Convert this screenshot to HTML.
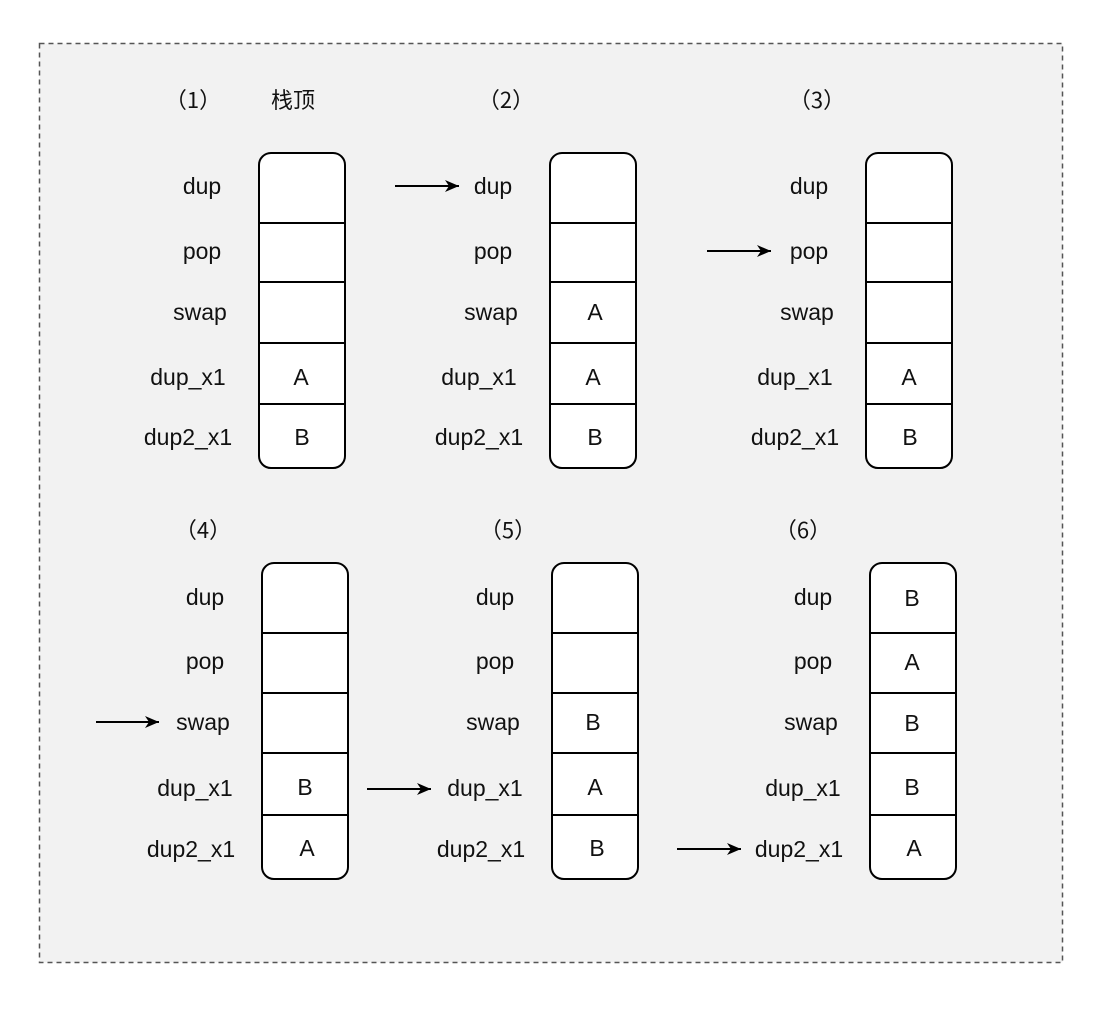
<!DOCTYPE html>
<html><head><meta charset="utf-8"><style>
html,body{margin:0;padding:0;background:#fff;}
svg{display:block;}
text{font-family:"Liberation Sans","Noto Sans CJK SC",sans-serif;font-size:23px;fill:#111;}
.t{font-family:"Noto Sans CJK SC",sans-serif;font-size:22px;}
</style></head><body>
<svg width="1114" height="1012" viewBox="0 0 1114 1012" xmlns="http://www.w3.org/2000/svg">
<defs>
<g id="box1">
<rect x="0" y="0" width="86" height="315" rx="12" fill="#fff" stroke="#000" stroke-width="2"/>
<line x1="1" y1="70" x2="85" y2="70" stroke="#000" stroke-width="2"/>
<line x1="1" y1="129" x2="85" y2="129" stroke="#000" stroke-width="2"/>
<line x1="1" y1="190" x2="85" y2="190" stroke="#000" stroke-width="2"/>
<line x1="1" y1="251" x2="85" y2="251" stroke="#000" stroke-width="2"/>
<g text-anchor="middle">
<text x="-57" y="41">dup</text>
<text x="-57" y="106">pop</text>
<text x="-59" y="167">swap</text>
<text x="-71" y="232">dup_x1</text>
<text x="-71" y="292">dup2_x1</text>
</g>
</g>
<g id="box2">
<rect x="0" y="0" width="86" height="316" rx="12" fill="#fff" stroke="#000" stroke-width="2"/>
<line x1="1" y1="70" x2="85" y2="70" stroke="#000" stroke-width="2"/>
<line x1="1" y1="130" x2="85" y2="130" stroke="#000" stroke-width="2"/>
<line x1="1" y1="190" x2="85" y2="190" stroke="#000" stroke-width="2"/>
<line x1="1" y1="252" x2="85" y2="252" stroke="#000" stroke-width="2"/>
<g text-anchor="middle">
<text x="-57" y="42">dup</text>
<text x="-57" y="106">pop</text>
<text x="-59" y="167">swap</text>
<text x="-67" y="233">dup_x1</text>
<text x="-71" y="294">dup2_x1</text>
</g>
</g>
<marker id="ah" markerWidth="16" markerHeight="14" refX="14" refY="6" orient="auto" markerUnits="userSpaceOnUse"><path d="M0,0 L14,6 L0,12 L4,6 Z" fill="#000"/></marker>
</defs>
<rect x="39.5" y="43.5" width="1023" height="919" fill="#f2f2f2" stroke="#555" stroke-width="1.5" stroke-dasharray="5,4"/>
<g text-anchor="middle">
<text class="t" x="193" y="108">（1）</text><text class="t" x="293" y="108">栈顶</text>
<text class="t" x="506" y="108">（2）</text><text class="t" x="817" y="108">（3）</text>
<text class="t" x="203" y="538">（4）</text><text class="t" x="508" y="538">（5）</text><text class="t" x="803" y="538">（6）</text>
</g>
<use href="#box1" transform="translate(259,153)"/>
<use href="#box1" transform="translate(550,153)"/>
<use href="#box1" transform="translate(866,153)"/>
<use href="#box2" transform="translate(262,563)"/>
<use href="#box2" transform="translate(552,563)"/>
<use href="#box2" transform="translate(870,563)"/>
<g text-anchor="middle">
<text x="301" y="385">A</text><text x="302" y="445">B</text>
<text x="595" y="320">A</text><text x="593" y="385">A</text><text x="595" y="445">B</text>
<text x="909" y="385">A</text><text x="910" y="445">B</text>
<text x="305" y="795">B</text><text x="307" y="856">A</text>
<text x="593" y="730">B</text><text x="595" y="795">A</text><text x="597" y="856">B</text>
<text x="912" y="606">B</text><text x="912" y="670">A</text><text x="912" y="731">B</text><text x="912" y="795">B</text><text x="914" y="856">A</text>
</g>
<g stroke="#000" stroke-width="2" marker-end="url(#ah)">
<line x1="395" y1="186" x2="459" y2="186"/>
<line x1="707" y1="251" x2="771" y2="251"/>
<line x1="96" y1="722" x2="159" y2="722"/>
<line x1="367" y1="789" x2="431" y2="789"/>
<line x1="677" y1="849" x2="741" y2="849"/>
</g>
</svg>
</body></html>
